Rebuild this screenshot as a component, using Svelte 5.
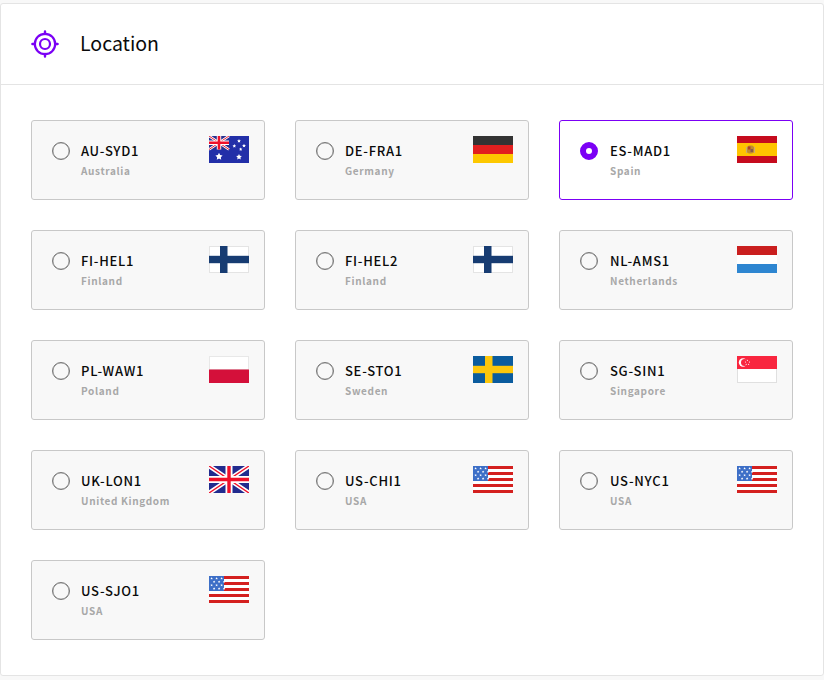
<script>
  const locations = [
    { code: 'AU-SYD1', name: 'Australia', flag: 'au' },
    { code: 'DE-FRA1', name: 'Germany', flag: 'de' },
    { code: 'ES-MAD1', name: 'Spain', flag: 'es', selected: true },
    { code: 'FI-HEL1', name: 'Finland', flag: 'fi' },
    { code: 'FI-HEL2', name: 'Finland', flag: 'fi' },
    { code: 'NL-AMS1', name: 'Netherlands', flag: 'nl' },
    { code: 'PL-WAW1', name: 'Poland', flag: 'pl' },
    { code: 'SE-STO1', name: 'Sweden', flag: 'se' },
    { code: 'SG-SIN1', name: 'Singapore', flag: 'sg' },
    { code: 'UK-LON1', name: 'United Kingdom', flag: 'uk' },
    { code: 'US-CHI1', name: 'USA', flag: 'us' },
    { code: 'US-NYC1', name: 'USA', flag: 'us' },
    { code: 'US-SJO1', name: 'USA', flag: 'us' }
  ];
  const starsUs = [];
  for (let r = 0; r < 4; r++) for (let c = 0; c < 3; c++)
    starsUs.push({ x: 2.6 + c * 5 + (r % 2 ? 2.5 : 0), y: 2.4 + r * 3.4 });
</script>

{#snippet star(x, y, r)}
  <polygon fill="#fff" transform="translate({x} {y}) scale({r})" points="0,-1 .29,-.4 .95,-.31 .47,.15 .59,.81 0,.5 -.59,.81 -.47,.15 -.95,-.31 -.29,-.4"/>
{/snippet}

{#snippet flag(id)}
  <svg class="flag" viewBox="0 0 40 27" width="40" height="27" aria-hidden="true">
    {#if id === 'au'}
      <rect width="40" height="27" fill="#222fa8"/>
      <rect width="20" height="13.5" fill="#28308f"/>
      <path d="M0 0 20 13.5M20 0 0 13.5" stroke="#fff" stroke-width="2.6"/>
      <path d="M0 0 20 13.5M20 0 0 13.5" stroke="#e8203a" stroke-width="1"/>
      <path d="M10 0V13.5M0 6.75H20" stroke="#fff" stroke-width="4.4"/>
      <path d="M10 0V13.5M0 6.75H20" stroke="#f0102a" stroke-width="2.6"/>
      {@render star(10, 20.6, 3.8)}
      <circle cx="10" cy="20.6" r="1.8" fill="#fff"/>
      {@render star(30, 21, 3)}
      <circle cx="30" cy="21" r="1.1" fill="#fff"/>
      {@render star(30, 5, 2)}
      {@render star(25.3, 10, 1.9)}
      {@render star(35, 9.7, 2)}
      {@render star(31.7, 13.3, 1.7)}
    {:else if id === 'de'}
      <rect width="40" height="9" fill="#333"/>
      <rect y="9" width="40" height="9" fill="#e11f1f"/>
      <rect y="18" width="40" height="9" fill="#fdc800"/>
    {:else if id === 'es'}
      <rect width="40" height="27" fill="#c60b1e"/>
      <rect y="7" width="40" height="13" fill="#ffc400"/>
      <rect x="10" y="9.5" width="7" height="8" rx="2.5" fill="#c08a30"/>
      <rect x="11" y="10.5" width="2.5" height="3" fill="#b3402a"/>
      <rect x="13.5" y="13" width="2.5" height="3" fill="#8a5a4a"/>
      <rect x="9" y="11" width="1" height="6" fill="#c9ae70"/>
      <rect x="17" y="11" width="1" height="6" fill="#c9ae70"/>
    {:else if id === 'fi'}
      <rect x=".5" y=".5" width="39" height="26" fill="#fff" stroke="#e4e4e4"/>
      <rect x="11" width="7.5" height="27" fill="#173c72"/>
      <rect y="9.8" width="40" height="7.4" fill="#173c72"/>
    {:else if id === 'nl'}
      <rect width="40" height="9" fill="#ca1f1f"/>
      <rect y="9" width="40" height="9" fill="#fff"/>
      <rect y="18" width="40" height="9" fill="#2e86d1"/>
    {:else if id === 'pl'}
      <rect x=".5" y=".5" width="39" height="13" fill="#fff" stroke="#e8e8e8"/>
      <rect y="13.5" width="40" height="13.5" fill="#d4103a"/>
    {:else if id === 'se'}
      <rect width="40" height="27" fill="#0b5c9e"/>
      <rect x="12" width="7.5" height="27" fill="#fdc70c"/>
      <rect y="9.8" width="40" height="7.4" fill="#fdc70c"/>
    {:else if id === 'sg'}
      <rect x=".5" y=".5" width="39" height="26" fill="#fff" stroke="#e0e0e0"/>
      <rect width="40" height="13" fill="#f9263f"/>
      <circle cx="6" cy="6.5" r="4.2" fill="#fff"/>
      <circle cx="7.6" cy="6.5" r="3.6" fill="#f9263f"/>
      {@render star(10.4, 4.4, .8)}
      {@render star(12.4, 6, .8)}
      {@render star(11.6, 8.4, .8)}
      {@render star(9.2, 8.4, .8)}
      {@render star(8.4, 6, .8)}
    {:else if id === 'uk'}
      <rect width="40" height="27" fill="#222b8e"/>
      <path d="M0 0 40 27M40 0 0 27" stroke="#fff" stroke-width="4.4"/>
      <path d="M0 0 40 27M40 0 0 27" stroke="#f0102a" stroke-width="1.4"/>
      <path d="M20 0V27M0 13.5H40" stroke="#fff" stroke-width="7"/>
      <path d="M20 0V27M0 13.5H40" stroke="#f0102a" stroke-width="3.4"/>
    {:else if id === 'us'}
      <rect width="40" height="27" fill="#fff"/>
      <rect y="0" width="40" height="3" fill="#d4201f"/>
      <rect y="6" width="40" height="3" fill="#d4201f"/>
      <rect y="12" width="40" height="3" fill="#d4201f"/>
      <rect y="18" width="40" height="3" fill="#d4201f"/>
      <rect y="24" width="40" height="3" fill="#d4201f"/>
      <rect width="15" height="15" fill="#3d6fc7"/>
      {#each starsUs as s}
        {@render star(s.x, s.y, 1.3)}
      {/each}
    {/if}
  </svg>
{/snippet}

<section class="panel">
  <header class="head">
    <svg class="target" viewBox="0 0 28 28" width="28" height="28" aria-hidden="true">
      <circle cx="14" cy="14" r="10.2" fill="none" stroke="#7b00f5" stroke-width="2.2"/>
      <circle cx="14" cy="14" r="5" fill="none" stroke="#7b00f5" stroke-width="2.2"/>
      <path d="M14 1.4V4M14 24V26.6M1.4 14H4M24 14H26.6" stroke="#7b00f5" stroke-width="2.4" stroke-linecap="round"/>
    </svg>
    <h2>Location</h2>
  </header>
  <div class="grid">
    {#each locations as l}
      <div class="loc" class:selected={l.selected}>
        <span class="radio"></span>
        <div class="text">
          <div class="code">{l.code}</div>
          <div class="name">{l.name}</div>
        </div>
        {@render flag(l.flag)}
      </div>
    {/each}
  </div>
</section>

<style>
  :global(body) {
    margin: 0;
    background: #f8f8f8;
    font-family: "Noto Sans CJK JP", "Noto Sans", sans-serif;
  }
  .panel {
    box-sizing: border-box;
    width: 824px;
    height: 673px;
    margin-top: 3px;
    background: #fff;
    border: 1px solid #e4e4e4;
    border-radius: 3px;
    overflow: hidden;
  }
  .head {
    display: flex;
    align-items: center;
    gap: 21px;
    height: 81px;
    padding-left: 30px;
    box-sizing: border-box;
    border-bottom: 1px solid #e4e4e4;
  }
  .target {
    display: block;
  }
  h2 {
    margin: 0 0 3px;
    font-size: 19.5px;
    font-weight: 400;
    color: #0a0a0a;
  }
  .grid {
    display: grid;
    grid-template-columns: repeat(3, 234px);
    grid-auto-rows: 80px;
    gap: 30px;
    padding: 35px 30px;
  }
  .loc {
    box-sizing: border-box;
    display: flex;
    align-items: flex-start;
    padding: 15px 15px 0 20px;
    background: #f8f8f8;
    border: 1px solid #c8c8c8;
    border-radius: 3px;
  }
  .loc:nth-child(3n) .text {
    margin-left: 12px;
  }
  .loc.selected {
    background: #fff;
    border-color: #7b00f5;
  }
  .radio {
    box-sizing: border-box;
    width: 18px;
    height: 18px;
    flex: none;
    border: 1px solid #777;
    box-shadow: inset 0 0 0 .3px #777;
    border-radius: 50%;
    margin-top: 6px;
  }
  .selected .radio {
    border: 6px solid #7b00f5;
    box-shadow: none;
    background: #fff;
  }
  .text {
    margin-left: 11px;
    flex: 1;
    min-width: 0;
  }
  .code {
    font-size: 13px;
    line-height: 20px;
    margin-top: 5px;
    font-weight: 500;
    color: #0a0a0a;
    letter-spacing: 0.72px;
  }
  .name {
    font-size: 10px;
    line-height: 16px;
    margin-top: 2px;
    font-weight: 700;
    color: #a8a8a8;
    letter-spacing: 0.65px;
  }
  .flag {
    display: block;
    flex: none;
  }
</style>
